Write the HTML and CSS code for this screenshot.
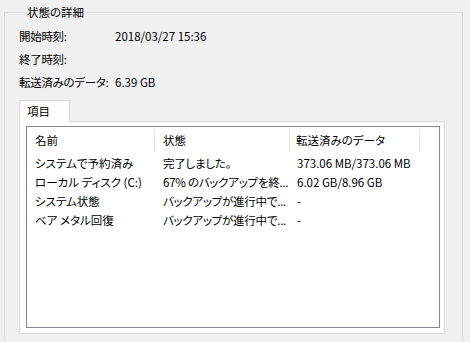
FILE: index.html
```html
<!DOCTYPE html>
<html lang="ja">
<head>
<meta charset="utf-8">
<link rel="stylesheet" href="styles.css">
</head>
<body>
<fieldset class="group">
  <legend class="group-title">状態の詳細</legend>
  <div class="info">
    <div class="info-row"><span class="info-label">開始時刻:</span><span class="info-value">2018/03/27 15:36</span></div>
    <div class="info-row"><span class="info-label">終了時刻:</span><span class="info-value"></span></div>
    <div class="info-row"><span class="info-label">転送済みのデータ:</span><span class="info-value">6.39 GB</span></div>
  </div>
  <div class="tabs">
    <div class="tab-strip"><div class="tab">項目</div></div>
    <div class="tab-panel">
      <div class="listview">
        <div class="lv-header">
          <div class="lv-col c1">名前</div>
          <div class="lv-col c2">状態</div>
          <div class="lv-col c3">転送済みのデータ</div>
        </div>
        <div class="lv-row"><div class="lv-cell c1">システムで予約済み</div><div class="lv-cell c2">完了しました。</div><div class="lv-cell c3">373.06 MB/373.06 MB</div></div>
        <div class="lv-row"><div class="lv-cell c1">ローカル ディスク (C:)</div><div class="lv-cell c2">67% のバックアップを終...</div><div class="lv-cell c3">6.02 GB/8.96 GB</div></div>
        <div class="lv-row"><div class="lv-cell c1">システム状態</div><div class="lv-cell c2">バックアップが進行中で...</div><div class="lv-cell c3">-</div></div>
        <div class="lv-row"><div class="lv-cell c1">ベア メタル回復</div><div class="lv-cell c2">バックアップが進行中で...</div><div class="lv-cell c3">-</div></div>
      </div>
    </div>
  </div>
</fieldset>
</body>
</html>
```
FILE: styles.css
```css
html, body {
  margin: 0;
  padding: 0;
  background: #f0f0f0;
  overflow: hidden;
  width: 470px;
  height: 342px;
}
body {
  font-family: "Noto Sans CJK JP", "Noto Sans", sans-serif;
  font-size: 11.5px;
  font-feature-settings: "palt";
  color: #000;
  padding: 4px 0 0 4px;
  box-sizing: border-box;
}
.group {
  margin: 0;
  width: 459px;
  height: 345px;
  box-sizing: border-box;
  border: 1px solid #dcdcdc;
  padding: 0 0 0 14px;
}
.group-title {
  padding: 0 2px;
  margin-left: 6px;
  line-height: 16px;
}
.info {
  display: flex;
  flex-direction: column;
  padding-top: 5px;
}
.info-row {
  display: flex;
  height: 23px;
  line-height: 23px;
  white-space: nowrap;
}
.info-label {
  width: 96px;
  flex-shrink: 0;
  letter-spacing: -0.3px;
}
.tabs {
  margin-top: 6px;
  width: 426px;
}
.tab-strip {
  display: flex;
}
.tab {
  width: 51px;
  height: 22px;
  box-sizing: border-box;
  background: #fff;
  border: 1px solid #d9d9d9;
  border-bottom: none;
  padding-left: 7px;
  line-height: 20px;
  margin-bottom: -1px;
  position: relative;
  z-index: 1;
}
.tab-panel {
  background: #fff;
  border: 1px solid #d9d9d9;
  height: 213px;
  box-sizing: border-box;
  padding: 4px 4px 5px 6px;
}
.listview {
  border: 1px solid #828790;
  height: 100%;
  box-sizing: border-box;
  background: #fff;
}
.lv-header {
  display: flex;
  height: 27px;
  align-items: stretch;
}
.lv-col {
  box-sizing: border-box;
  padding-left: 8px;
  line-height: 23px;
  border-right: 1px solid #e5e5e5;
  margin: 2px 0 2px;
}
.lv-col.c3 { padding-left: 6px; }
.c1 { width: 128px; }
.c2 { width: 135px; }
.c3 { width: 130px; }
.lv-row {
  display: flex;
  height: 19px;
  line-height: 19px;
}
.lv-cell {
  box-sizing: border-box;
  padding-left: 8px;
  white-space: nowrap;
  overflow: hidden;
}
.lv-cell.c2 { letter-spacing: -0.25px; }
.lv-cell.c3 { padding-left: 7px; }
```
